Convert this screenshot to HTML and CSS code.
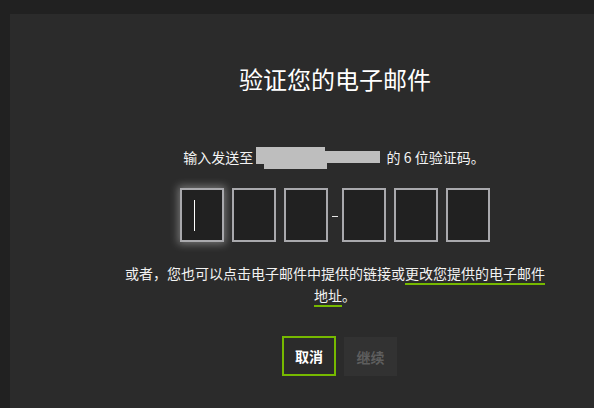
FILE: index.html
```html
<!DOCTYPE html>
<html lang="zh-CN">
<head>
<meta charset="utf-8">
<title>验证您的电子邮件</title>
<link rel="stylesheet" href="styles.css">
</head>
<body>
<div class="panel">
  <h1 class="title">验证您的电子邮件</h1>
  <p class="sub">输入发送至 <span class="redact"><span class="r1"></span><span class="r2"></span><span class="r3"></span></span> 的 6 位验证码。</p>
  <div class="code">
    <div class="box focus"><span class="caret"></span></div>
    <div class="box"></div>
    <div class="box"></div>
    <span class="dash"></span>
    <div class="box"></div>
    <div class="box"></div>
    <div class="box"></div>
  </div>
  <p class="note">或者，您也可以点击电子邮件中提供的链接或<a class="link" href="#">更改您提供的电子邮件地址</a>。</p>
  <div class="actions">
    <button class="btn cancel">取消</button>
    <button class="btn next" disabled>继续</button>
  </div>
</div>
</body>
</html>
```
FILE: styles.css
```css
html, body {
  margin: 0;
  padding: 0;
  background: #212121;
  overflow: hidden;
  height: 408px;
}
body {
  font-family: "Noto Sans CJK SC", "Noto Sans", sans-serif;
  color: #f2f2f2;
  padding: 14px 0 0 10px;
  box-sizing: border-box;
}
.panel {
  height: 394px;
  background: #2b2b2b;
  display: flex;
  flex-direction: column;
  align-items: center;
  box-sizing: border-box;
  padding: 49px 0 0 66px;
}
.title {
  margin: 0;
  font-size: 24px;
  font-weight: normal;
  line-height: 32px;
  color: #fff;
}
.sub {
  margin: 52px 0 0;
  font-size: 14px;
  line-height: 20px;
  color: #f4f4f4;
  padding-right: 2px;
}
.redact {
  display: inline-block;
  position: relative;
  width: 127px;
  height: 20px;
  vertical-align: top;
}
.redact span {
  position: absolute;
  background: #bebebe;
}
.redact .r1 { left: 0; top: 0; width: 69px; height: 17px; }
.redact .r2 { left: 8px; top: 10px; width: 63px; height: 12px; }
.redact .r3 { left: 69px; top: 4px; width: 55px; height: 12px; }
.code {
  margin-top: 21px;
  display: flex;
  align-items: center;
  gap: 8px;
}
.box {
  width: 44px;
  height: 54px;
  box-sizing: border-box;
  border: 2px solid #a9a9ad;
  background: #212121;
  position: relative;
}
.box.focus {
  box-shadow: 0 0 8px 2px rgba(255, 255, 255, 0.35);
}
.caret {
  position: absolute;
  left: 12px;
  top: 10px;
  width: 1px;
  height: 31px;
  background: #fff;
}
.dash {
  width: 6px;
  height: 1px;
  background: #e8e8e8;
  margin: 2px -4px 0;
}
.note {
  margin: 20px 0 0;
  width: 426px;
  text-align: center;
  font-size: 14px;
  line-height: 22px;
  color: #f2f2f2;
}
.link {
  color: #f2f2f2;
  text-decoration: none;
  border-bottom: 2px solid #76b900;
}
.actions {
  margin-top: 30px;
  display: flex;
  gap: 8px;
  padding-left: 9px;
}
.btn {
  font-family: "Noto Sans CJK SC", "Noto Sans", sans-serif;
  font-size: 14px;
  font-weight: bold;
  height: 40px;
  box-sizing: border-box;
  padding: 0;
  cursor: pointer;
}
.cancel {
  width: 54px;
  border: 2px solid #76b900;
  background: transparent;
  color: #fff;
}
.next {
  width: 53px;
  height: 39px;
  margin-top: 1px;
  border: none;
  background: #323232;
  color: #5e5e5e;
}
```
